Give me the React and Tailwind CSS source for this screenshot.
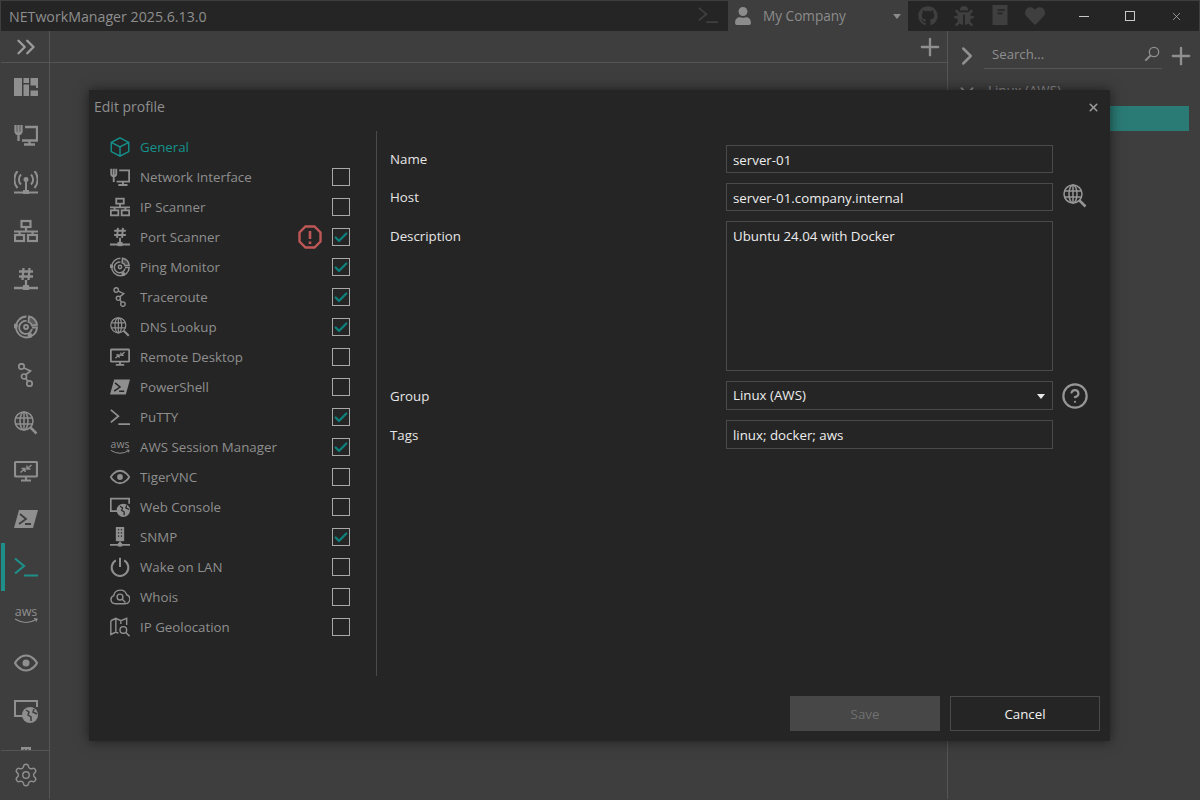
import { Settings, Check, CircleHelp, ChevronsRight, ChevronRight, Plus, X } from "lucide-react";
import { FaGithub, FaBug, FaHeart, FaUser } from "react-icons/fa";

const font = { fontFamily: '"Open Sans", sans-serif' };

function Ic({ size = 24, sw = 2, fill = "none", children }) {
  return (
    <svg viewBox="0 0 24 24" width={size} height={size} fill={fill} stroke="currentColor" strokeWidth={sw} className="mb-[2px] shrink-0">
      {children}
    </svg>
  );
}

const Dashboard = ({ size }) => (
  <Ic size={size} sw={0} fill="currentColor">
    <path d="M0 3h8v18H0zM9.500 3h5.500v5H9.500zM9.500 9.500h5.500V21H9.500zM16.500 3H24v10h-2v-2.500h-5.500zM16.500 15.500H24V21h-7.500z" />
  </Ic>
);
const NetIf = ({ size }) => (
  <Ic size={size} sw={2.300}>
    <path d="M1.500 2v6q0 3 3 3t3-3V2M4.500 2v16M11 4h12v13.500H8M15.500 17.500V21M10 21.500h11" />
  </Ic>
);
const Wifi = ({ size }) => (
  <Ic size={size}>
    <path d="M7 3.500a7 7 0 0 0 0 10M17 3.500a7 7 0 0 1 0 10M3.500 0a13 13 0 0 0 0 17M20.500 0a13 13 0 0 1 0 17M12 11v9M0 21.500h24" />
    <circle cx="12" cy="8.500" r="1.500" fill="currentColor" />
    <rect x="9" y="19" width="6" height="4" fill="currentColor" stroke="none" />
  </Ic>
);
const Sitemap = ({ size }) => (
  <Ic size={size} sw={2.200}>
    <rect x="7.500" y="2" width="9" height="6" />
    <rect x="1" y="16" width="9" height="6" />
    <rect x="14" y="16" width="9" height="6" />
    <path d="M12 8v4M0 12.500h24M5.500 12.500V16M18.500 12.500V16" />
  </Ic>
);
const Port = ({ size }) => (
  <Ic size={size} sw={2.300}>
    <path d="M9.500 1l-1 12M15.500 1l-1 12M5 4.500h14M5 9.500h14M12 13v6M0 21h24" />
    <rect x="9" y="18" width="6" height="5" fill="currentColor" stroke="none" />
  </Ic>
);
const Radar = ({ size }) => (
  <Ic size={size} sw={1.800}>
    <path d="M12.500 1.500A10.500 10.500 0 1 0 23 12.500H18M12.500 6A6.500 6.500 0 1 0 18 14" />
    <path d="M15 1.500a9 9 0 0 1 8 8.500l-5 .5a5 5 0 0 0-3.500-3.500z" fill="currentColor" fillOpacity="0.35" />
    <circle cx="12" cy="12" r="2" />
    <circle cx="1.500" cy="11" r="1.500" fill="currentColor" />
    <circle cx="16" cy="20.500" r="1.500" fill="currentColor" />
  </Ic>
);
const Trace = ({ size }) => (
  <Ic size={size} sw={1.700}>
    <circle cx="7.500" cy="3.500" r="2.700" />
    <circle cx="10" cy="13.500" r="2.500" />
    <circle cx="15.500" cy="20.500" r="2.700" />
    <path d="M10 5l6.500 3-4.500 3.500M12 15.500l2 3" />
  </Ic>
);
const GlobeSearch = ({ size }) => (
  <Ic size={size} sw={1.500}>
    <circle cx="10" cy="10" r="9" />
    <ellipse cx="10" cy="10" rx="4" ry="9" />
    <path d="M1.500 7h17M1.500 13h17M10 1v18" />
    <path d="M16.500 16.500l6 6" strokeWidth="2.500" />
  </Ic>
);
const Remote = ({ size }) => (
  <Ic size={size} sw={2.200}>
    <rect x="1" y="3" width="22" height="14.500" rx="1" />
    <path d="M12 17.500v3.500M7 21.500h10" />
    <path d="M6.500 13.500l4-3.500M7.500 9.500H11V13M17.500 6l-4 3.500M16.500 10H13V6.500" strokeWidth="1.500" />
  </Ic>
);
const PowerShell = ({ size, cut }) => (
  <Ic size={size} sw={0} fill="currentColor">
    <path d="M5 3h19l-5 18H0z" />
    <path d="M6 7l6 5-7 5M11 17h6" fill="none" stroke={cut} strokeWidth="1.800" />
  </Ic>
);
const Putty = ({ size }) => (
  <Ic size={size} sw={2.200}>
    <path d="M1 3.500l9 7.500-9 7.500M10 20.500h14" />
  </Ic>
);
const Aws = ({ size }) => (
  <Ic size={size} sw={1.200}>
    <text x="12" y="13" textAnchor="middle" fontSize="12.500" fill="currentColor" stroke="none" style={font}>aws</text>
    <path d="M1 16q11 7 22 0M20 15.500l3 .5-1 2.500" />
  </Ic>
);
const EyeIc = ({ size }) => (
  <Ic size={size} sw={2.200}>
    <path d="M1 12s4-7.500 11-7.500S23 12 23 12s-4 7.500-11 7.500S1 12 1 12z" />
    <circle cx="12" cy="12" r="3.500" fill="currentColor" stroke="none" />
  </Ic>
);
const WebConsole = ({ size, cut }) => (
  <Ic size={size}>
    <path d="M9 17H1V2h22v6" />
    <circle cx="16" cy="16" r="8" fill="currentColor" stroke="none" />
    <path d="M12 11l3 2-1 3 3 2v4M20 10l-1 3 4 2" stroke={cut} strokeWidth="1.500" />
  </Ic>
);
const Snmp = ({ size, cut }) => (
  <Ic size={size}>
    <rect x="7" y="0" width="10" height="17" fill="currentColor" stroke="none" />
    <path d="M9.500 3h1.500M13 3h1.500M9.500 7h1.500M13 7h1.500M9.500 11h1.500M13 11h1.500" stroke={cut} strokeWidth="1.500" />
    <path d="M12 17v4M0 21.500h24" />
    <rect x="9.500" y="19" width="5" height="4.500" fill="currentColor" stroke="none" />
  </Ic>
);
const Power = ({ size }) => (
  <Ic size={size} sw={2.400}>
    <path d="M12 1v11M7 4a10 10 0 1 0 10 0" />
  </Ic>
);
const Whois = ({ size }) => (
  <Ic size={size} sw={1.700}>
    <path d="M6 20a5 5 0 0 1-1.500-9.700 8 8 0 0 1 15.500-1A5.500 5.500 0 0 1 18.500 20z" />
    <circle cx="12" cy="12" r="3.500" />
    <path d="M14.500 14.500l4 4" />
  </Ic>
);
const Geo = ({ size }) => (
  <Ic size={size} sw={1.700}>
    <path d="M1 4.500l6-3 6 3 7-3v8M1 4.500v16.500l6-3 3 1.500M7 1.500V18M13 4.500v4" />
    <circle cx="16" cy="15.500" r="4" />
    <path d="M19 18.500l4.500 4.500" />
  </Ic>
);
const Cube = ({ size }) => (
  <Ic size={size} sw={1.700}>
    <path d="M12 1l10.500 5.500v11L12 23 1.500 17.500v-11zM1.500 6.500L12 12l10.500-5.500M12 12v11" />
  </Ic>
);
const Book = ({ size }) => (
  <Ic size={size} sw={0} fill="currentColor">
    <path d="M3 0h18v24H3zM9 5v2h9V5zM9 9v2h6V9z" fillRule="evenodd" />
  </Ic>
);
const Lens = ({ size }) => (
  <Ic size={size} sw={2}>
    <circle cx="15" cy="9" r="7" />
    <path d="M10 14l-8 8" strokeWidth="3" />
  </Ic>
);
const Warn = () => (
  <svg viewBox="0 0 24 24" width="24" height="24" fill="none" stroke="#c05757" strokeWidth="2.400" className="mb-[2px] mr-[10px] shrink-0">
    <path d="M7.500 1.500h9l6 6v9l-6 6h-9l-6-6v-9z" />
    <path d="M12 6v8M12 16.500v2.500" strokeWidth="2.600" />
  </svg>
);

const navIcons = [Dashboard, NetIf, Wifi, Sitemap, Port, Radar, Trace, GlobeSearch, Remote, PowerShell, Putty, Aws, EyeIc, WebConsole, Snmp];

const tabs = [
  { name: "Network Interface", icon: NetIf },
  { name: "IP Scanner", icon: Sitemap },
  { name: "Port Scanner", icon: Port, on: true, warn: true },
  { name: "Ping Monitor", icon: Radar, on: true },
  { name: "Traceroute", icon: Trace, on: true },
  { name: "DNS Lookup", icon: GlobeSearch, on: true },
  { name: "Remote Desktop", icon: Remote },
  { name: "PowerShell", icon: PowerShell },
  { name: "PuTTY", icon: Putty, on: true },
  { name: "AWS Session Manager", icon: Aws, on: true },
  { name: "TigerVNC", icon: EyeIc },
  { name: "Web Console", icon: WebConsole },
  { name: "SNMP", icon: Snmp, on: true },
  { name: "Wake on LAN", icon: Power },
  { name: "Whois", icon: Whois },
  { name: "IP Geolocation", icon: Geo },
];

function TitleBar() {
  return (
    <div className="flex h-[30px] shrink-0 items-stretch bg-[#252525] text-[#3f3f3f]">
      <div className="flex-1 pl-2 text-[14.200px] leading-[32px] text-[#8e8e8e]">NETworkManager 2025.6.13.0</div>
      <div className="flex w-[40px] items-center pl-[10px]">
        <Putty size={20} />
      </div>
      <div className="flex w-[180px] items-center bg-[#3e3e3e] text-[#8c8c8c]">
        <div className="ml-[6px] w-[29px]">
          <FaUser size={18} />
        </div>
        <span className="flex-1 text-[13.600px]">My Company</span>
        <svg width="8" height="5" className="mr-[7px]" fill="currentColor"><path d="M0 0h8L4 5z" /></svg>
      </div>
      <div className="flex w-[153px] items-center pl-[10px]">
        <div className="w-[38px]"><FaGithub size={20} /></div>
        <div className="w-[38px]"><FaBug size={20} /></div>
        <div className="w-[38px]"><Book size={20} /></div>
        <div className="w-[38px]"><FaHeart size={20} /></div>
      </div>
      <div className="flex w-[138px] items-center text-[#c8c8c8]">
        <div className="flex w-[46px] justify-center"><div className="h-px w-[10px] bg-[#c8c8c8]" /></div>
        <div className="flex w-[46px] justify-center"><div className="h-[10px] w-[10px] border border-[#c8c8c8]" /></div>
        <div className="flex w-[46px] justify-center"><X size={13} strokeWidth={1.200} /></div>
      </div>
    </div>
  );
}

function NavRail() {
  return (
    <div className="flex w-[49px] shrink-0 flex-col border-r border-[#555555] text-[#8f8f8f]">
      <div className="flex h-[32px] shrink-0 items-center justify-center border-b border-[#555555] pl-[2px] text-[#9c9c9c]">
        <ChevronsRight size={30} strokeWidth={1.900} />
      </div>
      <div className="flex-1 overflow-hidden">
        {navIcons.map((Icon, i) => (
          <div key={i} className={`flex h-[48px] items-center justify-center pt-[2px] ${i === 10 ? "border-l-4 border-[#1e8f88] pr-[2px] text-[#1e8f88]" : "pl-[2px]"}`}>
            <Icon size={24} cut="#3e3e3e" />
          </div>
        ))}
      </div>
      <div className="flex h-[49px] shrink-0 items-center justify-center border-t border-[#555555] pl-[2px]">
        <Settings size={26} strokeWidth={1.300} />
      </div>
    </div>
  );
}

function RightPanel() {
  return (
    <div className="flex w-[252px] shrink-0 flex-col border-l border-[#555555] text-[#8f8f8f]">
      <div className="flex h-[38px] shrink-0 items-center pl-[4px] pt-[11px]">
        <ChevronRight size={30} strokeWidth={2} />
        <div className="ml-[2px] flex h-[27px] w-[178px] items-center border-b border-[#555555] pl-[8px] pr-[2px]">
          <span className="flex-1 text-[13.200px]">Search...</span>
          <Lens size={16} />
        </div>
        <div className="ml-[5px]"><Plus size={28} strokeWidth={2} /></div>
      </div>
      <div className="mt-[12px] flex h-[20px] items-center pl-[8px] text-[13.300px]">
        <ChevronRight size={22} className="rotate-90" />
        <span className="ml-[10px]">Linux (AWS)</span>
      </div>
      <div className="ml-px mr-[10px] mt-[5px] h-[25px] bg-[#2a7a75]" />
    </div>
  );
}

function TabRow({ tab }) {
  const Icon = tab.icon;
  return (
    <div className="flex h-[30px] items-center text-[#8f8f8f]">
      <Icon size={20} cut="#252525" />
      <span className="ml-[10px] flex-1 text-[13.300px]">{tab.name}</span>
      {tab.warn && <Warn />}
      <div className="mb-[2px] flex h-[18px] w-[18px] items-center justify-center border border-[#a8a8a8]">
        {tab.on && <Check size={17} strokeWidth={3.500} className="text-[#0e7f7a]" />}
      </div>
    </div>
  );
}

function Field({ label, children, after, className = "h-[29px]", top }) {
  return (
    <div className={`flex ${className}`}>
      <div className={`flex w-[336px] shrink-0 text-[13.300px] text-[#e6e6e6] ${top ? "pt-[6px]" : "items-center pt-[2px]"}`}>{label}</div>
      <div className="w-[327px] shrink-0">{children}</div>
      {after && <div className="ml-[10px] flex items-center text-[#969696]">{after}</div>}
    </div>
  );
}

const boxClass = "h-full w-full border border-[#4a4a4a] bg-transparent px-[6px] text-[13.300px] text-[#ededed] outline-none";
const inputClass = `${boxClass} pt-px`;

function ProfileDialog() {
  return (
    <div className="absolute left-[88px] top-[89px] flex h-[651px] w-[1021px] flex-col bg-[#252525] shadow-[0_0_12px_rgba(0,0,0,0.55)]">
      <div className="flex h-[41px] shrink-0 items-start justify-between pl-[5px] pr-[10px] pt-[6px]">
        <span className="text-[14px] text-[#8f8f8f]">Edit profile</span>
        <X size={13} strokeWidth={3} className="mt-[5px] text-[#9a9a9a]" />
      </div>
      <div className="flex flex-1">
        <div className="w-[288px] shrink-0 border-r border-[#4a4a4a] pl-[21px] pr-[26px] pt-[2px]">
          <div className="flex h-[30px] items-center text-[#14928b]">
            <Cube size={20} />
            <span className="ml-[10px] text-[13.300px]">General</span>
          </div>
          {tabs.map((t) => (
            <TabRow key={t.name} tab={t} />
          ))}
        </div>
        <div className="flex flex-1 flex-col gap-[10px] pl-[13px] pt-[14px]">
          <Field label="Name" className="h-[28px]">
            <input readOnly defaultValue="server-01" className={inputClass} />
          </Field>
          <Field label="Host" after={<GlobeSearch size={24} />} className="h-[28px]">
            <input readOnly defaultValue="server-01.company.internal" className={inputClass} />
          </Field>
          <Field label="Description" className="h-[150px]" top>
            <textarea readOnly defaultValue="Ubuntu 24.04 with Docker" className={`${boxClass} resize-none py-[5px]`} />
          </Field>
          <Field label="Group" after={<div className="-ml-[2px]"><CircleHelp size={28} strokeWidth={1.900} /></div>}>
            <div className={`${inputClass} flex items-center justify-between`}>
              <span>Linux (AWS)</span>
              <svg width="8" height="5" className="mr-[1px]" fill="#e8e8e8"><path d="M0 0h8L4 5z" /></svg>
            </div>
          </Field>
          <Field label="Tags">
            <input readOnly defaultValue="linux; docker; aws" className={inputClass} />
          </Field>
        </div>
      </div>
      <div className="flex h-[65px] shrink-0 justify-end gap-[10px] pr-[10px] pt-[20px]">
        <button className="h-[35px] w-[150px] bg-[#474747] pt-[2px] text-[13.300px] text-[#707070]">Save</button>
        <button className="h-[35px] w-[150px] border border-[#4a4a4a] pt-[2px] text-[13.300px] text-[#f2f2f2]">Cancel</button>
      </div>
    </div>
  );
}

export default function App() {
  return (
    <div className="relative flex h-[800px] w-[1200px] flex-col overflow-hidden border border-[#3e3e3e] bg-[#3e3e3e]" style={font}>
      <TitleBar />
      <div className="flex flex-1 overflow-hidden">
        <NavRail />
        <div className="flex-1 text-[#8f8f8f]">
          <div className="flex h-[32px] items-center justify-end border-b border-[#555555] pr-[3px]">
            <Plus size={28} strokeWidth={2} />
          </div>
        </div>
        <RightPanel />
      </div>
      <ProfileDialog />
    </div>
  );
}
